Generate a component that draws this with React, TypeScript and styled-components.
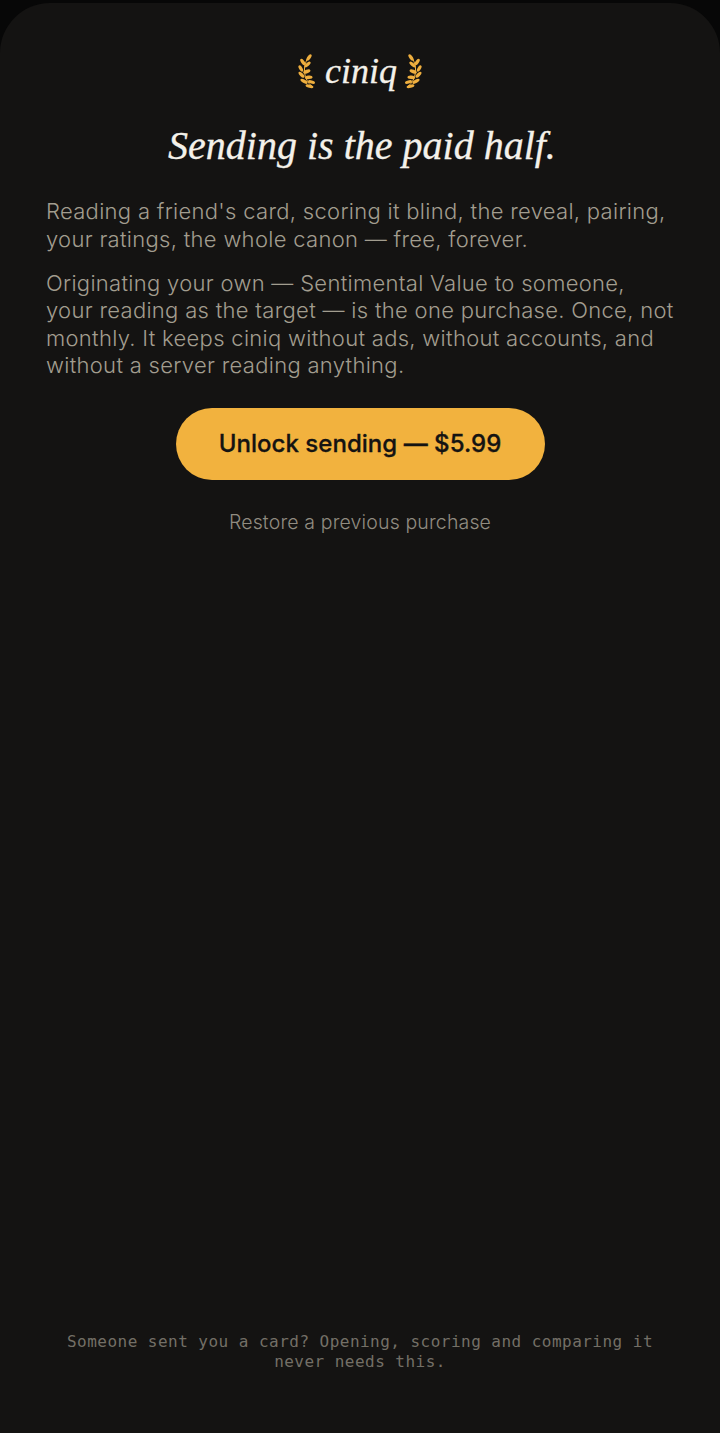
import React from 'react';
import styled, { createGlobalStyle } from 'styled-components';

const Global = createGlobalStyle`
  html, body { margin: 0; padding: 0; background: #070707; }
`;

const Sheet = styled.main`
  box-sizing: border-box;
  width: 720px;
  height: 1430px;
  margin-top: 3px;
  background: #141312;
  border-radius: 50px 50px 0 0;
  padding: 48px 46px 62px;
  display: flex;
  flex-direction: column;
  font-family: Inter, sans-serif;
`;

const Logo = styled.div`
  display: flex;
  justify-content: center;
  align-items: center;
  gap: 7px;
  height: 40px;
`;

const Wordmark = styled.span`
  padding-left: 2px;
  font-family: "Liberation Serif", serif;
  font-style: italic;
  font-size: 36px;
  line-height: 40px;
  color: #f4f1ea;
  -webkit-text-stroke: 0.3px #f4f1ea;
`;

const Title = styled.h1`
  margin: 31px 0 0;
  font-family: "Liberation Serif", serif;
  font-style: italic;
  font-weight: 400;
  font-size: 40px;
  line-height: 48px;
  text-align: center;
  text-indent: 4px;
  color: #f4f1ea;
  -webkit-text-stroke: 0.3px #f4f1ea;
`;

const Para = styled.p<{ $gap: number }>`
  margin: ${p => p.$gap}px 0 0;
  font-size: 22px;
  letter-spacing: 0.3px;
  line-height: 27.5px;
  font-weight: 350;
  color: #a29d8f;
`;

const Unlock = styled.button`
  align-self: center;
  margin-top: 28px;
  width: 369px;
  height: 72px;
  border: 0;
  border-radius: 36px;
  background: #f2b23e;
  color: #141312;
  font-family: Inter, sans-serif;
  font-size: 24px;
  font-weight: 500;
  letter-spacing: 0.03px;
  -webkit-text-stroke: 0.3px #141312;
`;

const Restore = styled.button`
  align-self: center;
  margin-top: 28px;
  background: none;
  border: 0;
  padding: 0;
  color: #918c81;
  font-family: Inter, sans-serif;
  font-size: 19.5px;
  font-weight: 350;
  letter-spacing: 0.15px;
  line-height: 28px;
`;

const Footnote = styled.p`
  margin: auto 0 0;
  font-family: "DejaVu Sans Mono", monospace;
  font-size: 16px;
  font-weight: 400;
  letter-spacing: 0.47px;
  line-height: 19.5px;
  text-align: center;
  color: #736f66;
`;

const Laurel = ({ flip }: { flip?: boolean }) => (
  <svg width="18" height="35" viewBox="0 0 18 35" style={flip ? { transform: 'scaleX(-1)' } : undefined} fill="#eeae3e">
    <path d="M15 33C9 29 6 22 6.500 14 7 9 9 5 11 2" fill="none" stroke="#eeae3e" strokeWidth="1" />
    <ellipse cx="11" cy="3.500" rx="3.800" ry="1.700" transform="rotate(-55 11 3.500)" />
    <ellipse cx="4.800" cy="8" rx="3.600" ry="1.700" transform="rotate(55 4.800 8)" />
    <ellipse cx="9.500" cy="10.500" rx="3.800" ry="1.700" transform="rotate(-40 9.500 10.500)" />
    <ellipse cx="2.800" cy="14.500" rx="3.600" ry="1.700" transform="rotate(60 2.800 14.500)" />
    <ellipse cx="8.800" cy="17.500" rx="3.800" ry="1.800" transform="rotate(-20 8.800 17.500)" />
    <ellipse cx="3.500" cy="20.800" rx="3.800" ry="1.700" transform="rotate(45 3.500 20.800)" />
    <ellipse cx="10.800" cy="23.300" rx="3.800" ry="1.800" transform="rotate(-5 10.800 23.300)" />
    <ellipse cx="6" cy="27.300" rx="4" ry="1.700" transform="rotate(30 6 27.300)" />
    <ellipse cx="13.500" cy="28" rx="3.600" ry="1.600" transform="rotate(15 13.500 28)" />
    <ellipse cx="11.500" cy="32.300" rx="4" ry="1.600" transform="rotate(15 11.500 32.300)" />
  </svg>
);

export default function App() {
  return (
    <>
      <Global />
      <Sheet>
        <Logo>
          <Laurel />
          <Wordmark>ciniq</Wordmark>
          <Laurel flip />
        </Logo>
        <Title>Sending is the paid half.</Title>
        <Para $gap={28}>Reading a friend's card, scoring it blind, the reveal, pairing, your ratings, the whole canon — free, forever.</Para>
        <Para $gap={16.5}>Originating your own — Sentimental Value to someone, your reading as the target — is the one purchase. Once, not monthly. It keeps ciniq without ads, without accounts, and without a server reading anything.</Para>
        <Unlock>Unlock sending — $5.99</Unlock>
        <Restore>Restore a previous purchase</Restore>
        <Footnote>Someone sent you a card? Opening, scoring and comparing it never needs this.</Footnote>
      </Sheet>
    </>
  );
}
